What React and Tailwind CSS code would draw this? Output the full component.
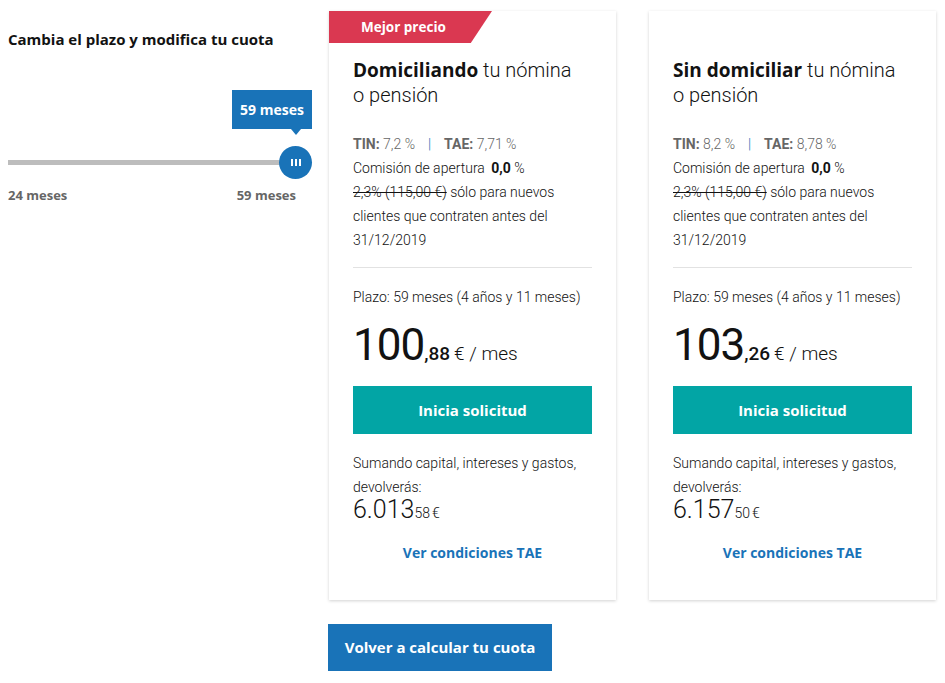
import { useState } from "react";

const BLUE = "#1973b8";

const offers = [
  {
    id: "dom",
    badge: "Mejor precio",
    strong: "Domiciliando",
    rest: " tu nómina",
    tin: "7,2 %",
    tae: "7,71 %",
    whole: "100",
    cents: ",88",
    totalWhole: "6.013",
    totalCents: "58",
  },
  {
    id: "sin",
    badge: null,
    strong: "Sin domiciliar",
    rest: " tu nómina",
    tin: "8,2 %",
    tae: "8,78 %",
    whole: "103",
    cents: ",26",
    totalWhole: "6.157",
    totalCents: "50",
  },
];

const TermSlider = ({ months }) => (
  <div className="w-[329px] pl-2 pr-[17px]">
    <p className="mt-[18px] font-['Open_Sans',sans-serif] text-[15px] font-bold leading-5 text-[#121212]">
      Cambia el plazo y modifica tu cuota
    </p>

    <div className="relative mt-[41px] h-[90px]">
      {/* tooltip */}
      <div className="absolute left-[224px] top-0 flex h-[39px] w-[80px] items-center justify-center bg-[#1973b8] font-['Open_Sans',sans-serif] text-[14px] font-bold text-white">
        {months} meses
        <span className="absolute bottom-[-6px] left-[59px] h-0 w-0 border-x-[5px] border-t-[6px] border-x-transparent border-t-[#1973b8]" />
      </div>

      {/* track */}
      <div className="absolute left-0 top-[70px] h-[5px] w-[284px] bg-[#bdbdbd]" />
      <div className="absolute left-[271px] top-[56px] flex h-[33px] w-[33px] items-center justify-center rounded-full bg-[#1973b8]">
        <span className="flex gap-[2px]">
          <span className="h-[7px] w-[2px] bg-white" />
          <span className="h-[7px] w-[2px] bg-white" />
          <span className="h-[7px] w-[2px] bg-white" />
        </span>
      </div>
    </div>

    <div className="mt-[6px] flex justify-between pr-[16px] font-['Open_Sans',sans-serif] text-[13px] font-bold text-[#666666]">
      <span>24 meses</span>
      <span>{months} meses</span>
    </div>
  </div>
);

const OfferCard = ({ offer }) => (
  <div className="relative w-[287px] bg-white shadow-[0_1px_3px_rgba(0,0,0,0.18)]">
    <div className="h-[32px]">
      {offer.badge && (
        <div className="flex h-[32px] w-[163px] items-center bg-[#da3851] pl-[32px] font-['Open_Sans',sans-serif] text-[13.5px] font-bold text-white [clip-path:polygon(0_0,100%_0,87%_100%,0_100%)]">
          {offer.badge}
        </div>
      )}
    </div>

    <div className="px-6 pb-[37px]">
      <h3 className="mt-[15px] text-[20px] leading-[25px] font-light text-[#121212]">
        <span className="font-['Open_Sans',sans-serif] text-[19px] font-bold">{offer.strong}</span>
        {offer.rest}
        <br />o pensión
      </h3>

      <div className="mt-[24px] text-[14px] leading-[24px] font-light text-[#121212]">
        <p className="text-[#666666]">
          <span className="font-bold">TIN:</span> {offer.tin}
          <span className="mx-[13px] text-[#1973b8]">|</span>
          <span className="font-bold">TAE:</span> {offer.tae}
        </p>
        <p>
          Comisión de apertura <span className="ml-[3px] font-bold">0,0</span> %
        </p>
        <p>
          <span className="line-through">2,3% (115,00 €)</span> sólo para nuevos clientes
          que contraten antes del 31/12/2019
        </p>
      </div>

      <div className="mt-[15px] border-t border-[#e2e2e2] pt-[19px]">
        <p className="text-[14px] leading-5 font-light text-[#121212]">
          Plazo: 59 meses (4 años y 11 meses)
        </p>
        <p className="mt-[12px] flex items-baseline font-light text-[#121212]">
          <span className="text-[44px] leading-[52px] font-normal tracking-[-1px]">{offer.whole}</span>
          <span className="text-[19px] font-medium">{offer.cents}</span>
          <span className="ml-[4px] text-[19px]">€ / mes</span>
        </p>
        <button
          type="button"
          className="mt-[15px] h-[48px] w-full bg-[#02a5a5] font-['Open_Sans',sans-serif] text-[15px] font-bold text-white"
        >
          Inicia solicitud
        </button>
      </div>

      <div className="mt-[17px] text-[14px] leading-[24px] font-light text-[#121212]">
        <p>Sumando capital, intereses y gastos, devolverás:</p>
        <p className="-mt-[3px] flex items-baseline leading-[28px]">
          <span className="text-[25px]">{offer.totalWhole}</span>
          <span className="text-[14px]">{offer.totalCents}</span>
          <span className="ml-[2px] text-[14px]">€</span>
        </p>
      </div>

      <p className="mt-[15px] text-center font-['Open_Sans',sans-serif] text-[14px] font-bold text-[#1973b8]">
        Ver condiciones TAE
      </p>
    </div>
  </div>
);

export default function App() {
  const [months] = useState(59);

  return (
    <div className="flex min-h-screen bg-white pt-[11px] font-['Roboto',sans-serif]">
      <TermSlider months={months} />
      <div className="flex flex-col">
        <div className="flex gap-[33px]">
          {offers.map((o) => (
            <OfferCard key={o.id} offer={o} />
          ))}
        </div>
        <button
          type="button"
          className="mt-[24px] h-[47px] w-[224px] -ml-[1px] bg-[#1973b8] font-['Open_Sans',sans-serif] text-[15px] font-bold text-white"
          style={{ backgroundColor: BLUE }}
        >
          Volver a calcular tu cuota
        </button>
      </div>
    </div>
  );
}
